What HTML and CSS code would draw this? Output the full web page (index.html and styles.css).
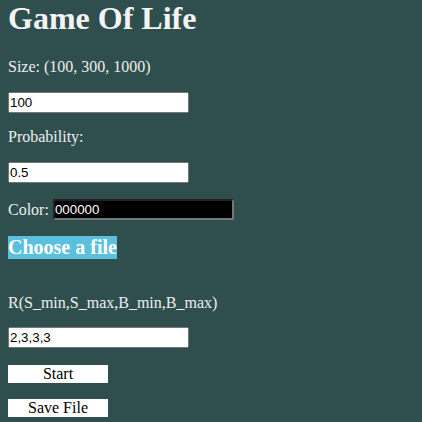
FILE: index.html
```html
<!DOCTYPE html>
<html>
<head>
<meta charset="utf-8">
<link rel="stylesheet" href="styles.css">
</head>
<body>
<h1 class="title">Game Of Life</h1>
<p class="label label-size">Size: (100, 300, 1000)</p>
<input class="field field-size" type="text" value="100">
<p class="label label-prob">Probability:</p>
<input class="field field-prob" type="text" value="0.5">
<div class="color-row"><span class="color-text">Color:</span><input class="field color-field" type="text" value="000000"></div>
<div class="file-row"><label class="file-label">Choose a file</label></div>
<p class="label label-rule">R(S_min,S_max,B_min,B_max)</p>
<input class="field field-rule" type="text" value="2,3,3,3">
<button class="btn btn-start" type="button">Start</button>
<button class="btn btn-save" type="button">Save File</button>
</body>
</html>
```

FILE: styles.css
```css
html, body {
  background: #2f4f4f;
}
body {
  margin: 0 8px;
  font-family: "Liberation Serif", serif;
  font-size: 16px;
  color: #eeeeee;
  display: flex;
  flex-direction: column;
  align-items: flex-start;
}
.title {
  margin: 0;
  font-size: 32px;
  line-height: 37px;
  font-weight: bold;
  color: #f4f4f4;
}
.label {
  margin: 0;
  line-height: 18px;
}
.label-size { margin-top: 21px; }
.field-size { margin-top: 16px; }
.label-prob { margin-top: 15px; }
.field-prob { margin-top: 16px; }
.label-rule { margin-top: 35px; }
.field-rule { margin-top: 15px; }
.btn-start { margin-top: 17px; }
.btn-save { margin-top: 16px; }
.field {
  width: 181px;
  height: 21px;
  padding: 1px 0;
  box-sizing: border-box;
  font-family: "Liberation Sans", Arial, sans-serif;
  font-size: 13.33px;
  margin-left: 0;
  margin-right: 0;
  margin-bottom: 0;
}
.color-row {
  margin-top: 16px;
  display: flex;
  align-items: center;
  height: 21px;
  line-height: 18px;
}
.color-text {
  margin-right: 4px;
}
.color-field {
  background: #000;
  color: #fff;
  margin: 0;
}
.file-row {
  margin-top: 16px;
  height: 23px;
}
.file-label {
  display: inline-block;
  height: 23px;
  line-height: 23px;
  background: #5bc0de;
  font-weight: bold;
  font-size: 20px;
  color: #fff;
}
.btn {
  width: 100px;
  height: 18px;
  padding: 0;
  border: none;
  background: #fff;
  color: #000;
  font-family: "Liberation Serif", serif;
  font-size: 16px;
  line-height: 18px;
  margin-left: 0;
  margin-right: 0;
  margin-bottom: 0;
}
```
